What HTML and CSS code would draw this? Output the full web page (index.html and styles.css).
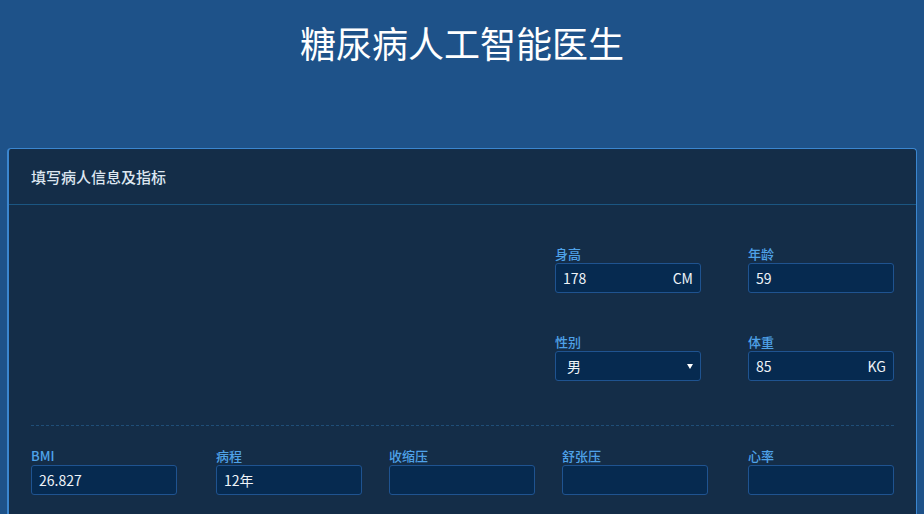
FILE: index.html
```html
<!DOCTYPE html>
<html lang="zh-CN">
<head>
<meta charset="utf-8">
<title>糖尿病人工智能医生</title>
<link rel="stylesheet" href="styles.css">
</head>
<body>
<header class="page-head">
  <h1 class="page-title">糖尿病人工智能医生</h1>
</header>
<section class="card">
  <div class="card-head">填写病人信息及指标</div>
  <div class="card-body">
    <div class="top-area">
      <div class="top-grid">
        <div class="field">
          <label class="field-label">身高</label>
          <div class="input"><span class="val">178</span><span class="unit">CM</span></div>
        </div>
        <div class="field">
          <label class="field-label">年龄</label>
          <div class="input"><span class="val">59</span></div>
        </div>
        <div class="field">
          <label class="field-label">性别</label>
          <div class="input select"><span class="val">男</span><span class="caret"></span></div>
        </div>
        <div class="field">
          <label class="field-label">体重</label>
          <div class="input"><span class="val">85</span><span class="unit">KG</span></div>
        </div>
      </div>
    </div>
    <div class="divider"></div>
    <div class="bottom-grid">
      <div class="field">
        <label class="field-label">BMI</label>
        <div class="input"><span class="val">26.827</span></div>
      </div>
      <div class="field">
        <label class="field-label">病程</label>
        <div class="input"><span class="val">12年</span></div>
      </div>
      <div class="field">
        <label class="field-label">收缩压</label>
        <div class="input"></div>
      </div>
      <div class="field">
        <label class="field-label">舒张压</label>
        <div class="input"></div>
      </div>
      <div class="field">
        <label class="field-label">心率</label>
        <div class="input"></div>
      </div>
    </div>
  </div>
</section>
</body>
</html>
```
FILE: styles.css
```css
html, body {
  margin: 0;
  padding: 0;
}
body {
  background: #1e5289;
  font-family: "Noto Sans CJK SC", "Noto Sans", sans-serif;
  color: #e8eef5;
  height: 514px;
  overflow: hidden;
}
.page-head {
  height: 148px;
  box-sizing: border-box;
  padding-top: 17px;
}
.page-title {
  margin: 0;
  text-align: center;
  font-size: 36px;
  line-height: 50px;
  font-weight: 400;
  color: #ffffff;
}
.card {
  margin: 0 7px;
  background: #142d48;
  border: 1px solid #3b86cf;
  border-left-width: 2px;
  border-bottom: 0;
  border-radius: 4px 4px 0 0;
  height: 366px;
}
.card-head {
  height: 55px;
  border-bottom: 1px solid #1b5682;
  padding: 0 22px;
  display: flex;
  align-items: center;
  font-size: 15px;
  font-weight: 500;
  color: #dde6f0;
}
.card-body {
  padding: 40px 22px 0;
}
.top-area {
  display: flex;
  justify-content: flex-end;
}
.top-grid {
  display: grid;
  grid-template-columns: 146px 146px;
  column-gap: 47px;
  row-gap: 40px;
}
.field {
  display: flex;
  flex-direction: column;
}
.field-label {
  font-size: 13px;
  line-height: 17px;
  margin-bottom: 1px;
  color: #4fa2e8;
  font-weight: 500;
}
.input {
  height: 30px;
  box-sizing: border-box;
  border: 1px solid #1f5390;
  border-radius: 3px;
  background: #062a50;
  display: flex;
  align-items: center;
  justify-content: space-between;
  padding: 0 7px;
  font-size: 14px;
  color: #eef3f8;
}
.select .val {
  padding-left: 4px;
}
.caret {
  width: 0;
  height: 0;
  border-left: 3px solid transparent;
  border-right: 3px solid transparent;
  border-top: 5px solid #ffffff;
  margin-right: 0;
}
.divider {
  margin-top: 44px;
  border-top: 1px dashed #1f4e78;
  margin-bottom: 21px;
}
.bottom-grid {
  display: grid;
  grid-template-columns: 185px 173px 173px 186px 146px;
}
.bottom-grid .input {
  width: 146px;
}
```
